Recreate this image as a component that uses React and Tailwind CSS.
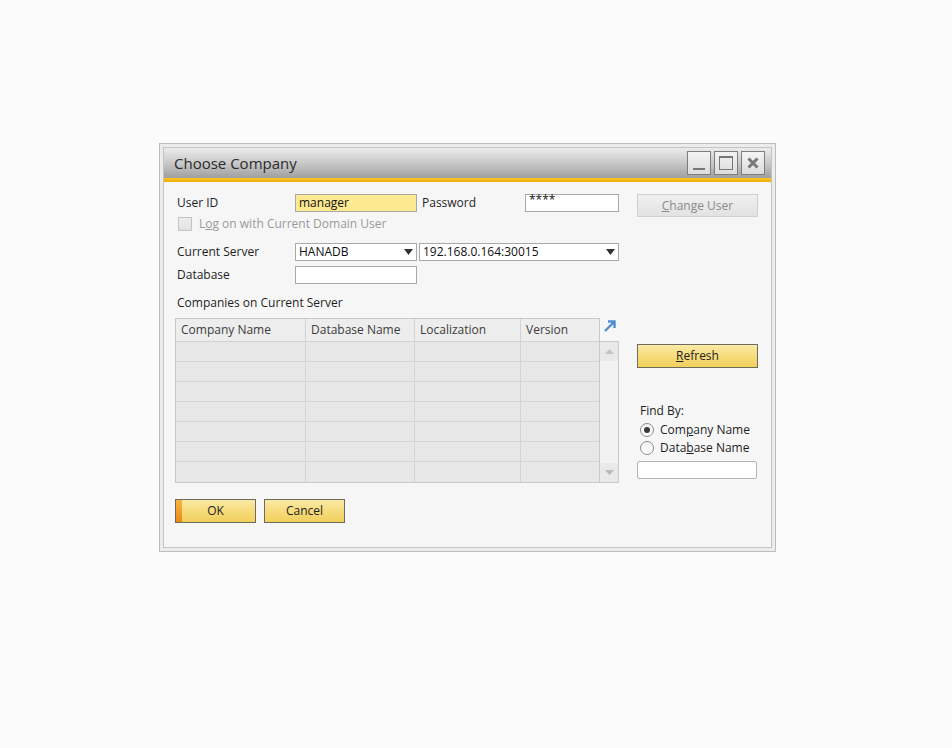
import { useState } from 'react';

// ════════════════════════════════════════════════════════════
// SMALL PIECES
// ════════════════════════════════════════════════════════════
const font = { fontFamily: '"Open Sans", "Noto Sans", sans-serif' };

const Caret = ({ className = '' }) => (
  <svg width="9" height="6" viewBox="0 0 9 6" className={className}>
    <path d="M0 0 H9 L4.5 6 Z" fill="#333" />
  </svg>
);

const TitleBtn = ({ children }) => (
  <div className="flex h-[24px] w-[24px] items-center justify-center border border-[#7d7d7d] bg-gradient-to-b from-[#f4f4f4] to-[#dcdcdc]">
    {children}
  </div>
);

const Field = ({ className = '', children }) => (
  <div className={`flex h-[18px] items-center border border-[#a9a9a9] px-[3px] text-[12px] text-[#111] ${className}`}>
    {children}
  </div>
);

const Select = ({ w, value }) => (
  <div className={`flex h-[18px] ${w} items-center justify-between border border-[#a9a9a9] bg-white pl-[3px] pr-[3px] text-[12px] text-[#111]`}>
    <span>{value}</span>
    <Caret />
  </div>
);

const YellowBtn = ({ w, children, okStrip }) => (
  <button className={`relative flex h-[24px] ${w} items-center justify-center overflow-hidden border border-[#6e6a5c] bg-gradient-to-b from-[#fbeaa6] via-[#f6dc7c] to-[#f0cf5a] text-[12px] text-[#222]`}>
    {okStrip && <span className="absolute left-0 top-0 h-full w-[6px] bg-gradient-to-b from-[#f7b43a] to-[#ea8a12]" />}
    {children}
  </button>
);

const Radio = ({ checked, children }) => (
  <div className="flex h-[18px] items-center gap-[6px]">
    <span className="flex h-[14px] w-[14px] items-center justify-center rounded-full border border-[#8a8a8a] bg-gradient-to-b from-[#f2f2f2] to-white">
      {checked && <span className="h-[6px] w-[6px] rounded-full bg-[#3a3a3a]" />}
    </span>
    <span>{children}</span>
  </div>
);

// ════════════════════════════════════════════════════════════
// APP
// ════════════════════════════════════════════════════════════
export default function App() {
  const [findBy, setFindBy] = useState('company');
  const cols = [
    { label: 'Company Name', w: 'w-[130px]' },
    { label: 'Database Name', w: 'w-[109px]' },
    { label: 'Localization', w: 'w-[106px]' },
    { label: 'Version', w: 'w-[78px]' },
  ];
  const rows = [0, 1, 2, 3, 4, 5, 6];

  return (
    <div className="h-[748px] w-[952px] bg-[#fbfbfb]" style={font}>
      <div className="pl-[159px] pt-[143px]">
        {/* window frame */}
        <div className="w-[617px] border border-[#bdbdbd] bg-[#ececec] p-[3px]">
          <div className="border border-[#c4c4c4] bg-[#f6f6f6]">
            {/* title bar */}
            <div className="flex h-[30px] items-center justify-between bg-gradient-to-b from-[#ececec] via-[#c9c9c9] to-[#9f9f9f] pl-[10px] pr-[6px]">
              <span className="text-[15px] leading-[18px] text-[#2a2a2a]">Choose Company</span>
              <div className="flex gap-[3px]">
                <TitleBtn><span className="mt-[12px] h-[2px] w-[12px] bg-[#777]" /></TitleBtn>
                <TitleBtn><span className="h-[14px] w-[14px] border border-[#777] border-t-[2px]" /></TitleBtn>
                <TitleBtn>
                  <svg width="12" height="12" viewBox="0 0 12 12"><path d="M1.5 1.5 L10.5 10.5 M10.5 1.5 L1.5 10.5" stroke="#777" strokeWidth="3" /></svg>
                </TitleBtn>
              </div>
            </div>
            <div className="h-[4px] bg-gradient-to-b from-[#f9c82a] to-[#efaa00]" />

            {/* body */}
            <div className="flex gap-[18px] pl-[11px] pr-[13px] pt-[12px] text-[12px] leading-[16px] text-[#1e1e1e]">
              <div className="w-[444px]">
                <div className="flex items-center">
                  <span className="w-[120px] pl-[2px]">User ID</span>
                  <Field className="w-[122px] bg-[#fde98f]">manager</Field>
                  <span className="w-[108px] pl-[5px]">Password</span>
                  <Field className="w-[94px] items-start bg-white text-[10px] leading-[10px]">****</Field>
                </div>
                <div className="mt-[4px] flex h-[16px] items-center gap-[7px] pl-[3px] text-[#9a9a9a]">
                  <span className="h-[14px] w-[14px] border border-[#c4c4c4] bg-gradient-to-b from-[#eeeeee] to-[#e2e2e2]" />
                  <span>L<u>o</u>g on with Current Domain User</span>
                </div>
                <div className="mt-[11px] flex items-center">
                  <span className="w-[120px] pl-[2px]">Current Server</span>
                  <Select w="w-[122px]" value="HANADB" />
                  <span className="w-[2px]" />
                  <Select w="w-[200px]" value="192.168.0.164:30015" />
                </div>
                <div className="mt-[5px] flex items-center">
                  <span className="w-[120px] pl-[2px]">Database</span>
                  <Field className="w-[122px] bg-white" />
                </div>
                <div className="mt-[11px] pl-[2px]">Companies on Current Server</div>

                {/* grid */}
                <div className="mt-[7px] flex">
                  <div className="border border-[#c8c8c8] bg-[#e7e7e7]">
                    <div className="flex h-[23px] bg-[#ededed] text-[#3c3c3c]">
                      {cols.map((c, i) => (
                        <div key={c.label} className={`${c.w} flex items-center border-b border-[#d2d2d2] pl-[5px] ${i < 3 ? 'border-r' : ''}`}>
                          {c.label}
                        </div>
                      ))}
                    </div>
                    {rows.map((r) => (
                      <div key={r} className="flex h-[20px]">
                        {cols.map((c, i) => (
                          <div key={c.label} className={`${c.w} border-[#d4d4d4] ${r < 6 ? 'border-b' : ''} ${i < 3 ? 'border-r' : ''}`} />
                        ))}
                      </div>
                    ))}
                  </div>
                  <div className="flex w-[20px] flex-col">
                    <div className="flex h-[23px] items-start justify-center pt-[1px]">
                      <svg width="14" height="14" viewBox="0 0 14 14">
                        <path d="M2 12 L11 3 M5 2.5 H11.5 V9" stroke="#4d8fd4" strokeWidth="2.4" fill="none" />
                      </svg>
                    </div>
                    <div className="flex flex-1 flex-col justify-between border border-l-0 border-[#c8c8c8] bg-[#f2f2f2]">
                      <div className="flex h-[19px] items-center justify-center bg-[#e9e9e9]">
                        <svg width="9" height="5" viewBox="0 0 9 5"><path d="M0 5 H9 L4.5 0 Z" fill="#c3c3c3" /></svg>
                      </div>
                      <div className="flex h-[19px] items-center justify-center bg-[#e9e9e9]">
                        <svg width="9" height="5" viewBox="0 0 9 5"><path d="M0 0 H9 L4.5 5 Z" fill="#b9b9b9" /></svg>
                      </div>
                    </div>
                  </div>
                </div>

                <div className="mt-[16px] flex gap-[8px] pb-[24px]">
                  <YellowBtn w="w-[81px]" okStrip>OK</YellowBtn>
                  <YellowBtn w="w-[81px]">Cancel</YellowBtn>
                </div>
              </div>

              {/* right column */}
              <div className="flex w-[121px] flex-col">
                <button className="flex h-[23px] w-[121px] items-center justify-center border border-[#d0d0d0] bg-gradient-to-b from-[#f0f0f0] to-[#e2e2e2] text-[#8a8a8a]">
                  <span><u>C</u>hange User</span>
                </button>
                <div className="mt-[127px]">
                  <YellowBtn w="w-[121px]"><span><u>R</u>efresh</span></YellowBtn>
                </div>
                <div className="mt-[35px] pl-[3px]">
                  <div>Find By:</div>
                  <div className="mt-[2px]" onClick={() => setFindBy('company')}>
                    <Radio checked={findBy === 'company'}>Com<u>p</u>any Name</Radio>
                  </div>
                  <div onClick={() => setFindBy('database')}>
                    <Radio checked={findBy === 'database'}>Data<u>b</u>ase Name</Radio>
                  </div>
                </div>
                <div className="mt-[4px] h-[18px] w-[120px] rounded-[2px] border border-[#b4b4b4] bg-white" />
              </div>
            </div>
          </div>
        </div>
      </div>
    </div>
  );
}
